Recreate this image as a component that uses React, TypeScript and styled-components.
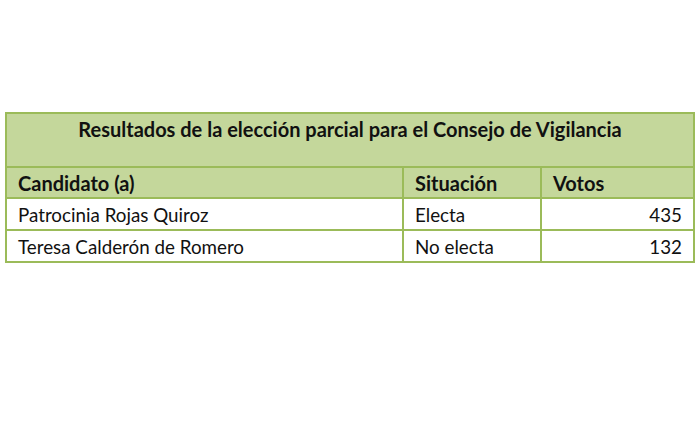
import styled, { createGlobalStyle } from 'styled-components'

const GlobalStyle = createGlobalStyle`
  html, body {
    margin: 0;
    padding: 0;
    background: #ffffff;
  }
`

const rows = [
  { name: 'Patrocinia Rojas Quiroz', status: 'Electa', votes: 435 },
  { name: 'Teresa Calderón de Romero', status: 'No electa', votes: 132 },
]

export default function App() {
  return (
    <>
      <GlobalStyle />
      <StyledPage>
        <StyledTable>
          <colgroup>
            <col style={{ width: 397 }} />
            <col style={{ width: 138 }} />
            <col style={{ width: 153 }} />
          </colgroup>
          <tbody>
            <tr>
              <StyledTitle colSpan={3}>
                Resultados de la elección parcial para el Consejo de Vigilancia
              </StyledTitle>
            </tr>
            <tr>
              <StyledHead>Candidato (a)</StyledHead>
              <StyledHead>Situación</StyledHead>
              <StyledHead>Votos</StyledHead>
            </tr>
            {rows.map((row) => (
              <tr key={row.name}>
                <StyledCell>{row.name}</StyledCell>
                <StyledCell>{row.status}</StyledCell>
                <StyledCell $right>{row.votes}</StyledCell>
              </tr>
            ))}
          </tbody>
        </StyledTable>
      </StyledPage>
    </>
  )
}

const StyledPage = styled.div`
  width: 700px;
  height: 440px;
  padding: 112px 0 0 5px;
  box-sizing: border-box;
  font-family: Lato, 'Liberation Sans', sans-serif;
  color: #111111;
`

const StyledTable = styled.table`
  border-collapse: collapse;
  table-layout: fixed;
  width: 690px;
  border: 2px solid #9bbb59;
`

const StyledTitle = styled.td`
  height: 54px;
  background: #c4d79b;
  border: 2px solid #9bbb59;
  text-align: center;
  vertical-align: top;
  padding: 3px 0 0 0;
  font-size: 20px;
  font-weight: 700;
  box-sizing: border-box;
`

const StyledHead = styled.td`
  height: 31px;
  background: #c4d79b;
  border: 2px solid #9bbb59;
  padding: 0 11px;
  font-size: 20px;
  font-weight: 700;
  box-sizing: border-box;
`

const StyledCell = styled.td<{ $right?: boolean }>`
  height: 32px;
  background: #ffffff;
  border: 2px solid #9bbb59;
  padding: 0 11px;
  font-size: 18.8px;
  text-align: ${(p) => (p.$right ? 'right' : 'left')};
  box-sizing: border-box;
`
